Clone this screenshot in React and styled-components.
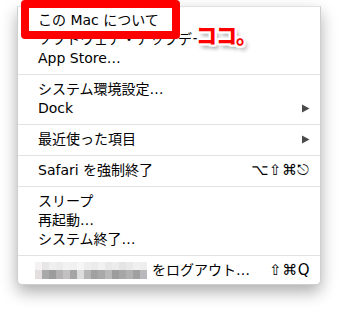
import React from "react";
import styled, { createGlobalStyle } from "styled-components";

const GlobalStyle = createGlobalStyle`
  html, body { margin: 0; padding: 0; background: #ffffff; }
  body { font-family: "DejaVu Sans", "Noto Sans CJK JP", sans-serif; }
`;

const Stage = styled.div`
  position: relative;
  width: 338px;
  height: 311px;
  box-sizing: border-box;
  padding: 6px 0 0 17px;
  overflow: hidden;
`;

const Menu = styled.div`
  width: 304px;
  box-sizing: border-box;
  background: #ffffff;
  border: 1px solid #cfcfcf;
  border-top-color: #e2e2e2;
  border-radius: 0 0 5px 5px;
  box-shadow: 0 7px 16px rgba(0, 0, 0, 0.32);
  padding: 4px 0;
`;

const Item = styled.div`
  display: flex;
  align-items: center;
  height: 19px;
  padding: 0 10px 0 20px;
  font-family: "DejaVu Sans", "Noto Sans CJK JP", sans-serif;
  font-size: 14px;
  line-height: 19px;
  color: #000000;
  white-space: nowrap;
`;

const Label = styled.span`
  flex: 1;
  display: flex;
  align-items: center;
`;

const Shortcut = styled.span`
  font-family: "DejaVu Sans", "Noto Sans CJK JP", sans-serif;
  font-size: 15px;
  letter-spacing: 0.5px;
  color: #000;
`;

const Separator = styled.div`
  height: 1px;
  background: #e2e2e2;
  margin: 6px 0 5px;
`;

const Mosaic = styled.svg`
  display: block;
  margin-right: 5px;
  margin-left: -3px;
`;

const Highlight = styled.div`
  position: absolute;
  left: 21px;
  top: 0;
  width: 159px;
  height: 39px;
  box-sizing: border-box;
  border: 8px solid #ff0000;
  border-radius: 4px;
`;

const Callout = styled.div`
  position: absolute;
  left: 196px;
  top: 24px;
  font-family: "Noto Sans CJK JP", sans-serif;
  font-weight: 900;
  font-size: 21px;
  line-height: 1;
  color: #ff0000;
  letter-spacing: -1px;
  text-shadow:
    2px 0 0 #fff, -2px 0 0 #fff, 0 2px 0 #fff, 0 -2px 0 #fff,
    2px 2px 0 #fff, -2px -2px 0 #fff, 2px -2px 0 #fff, -2px 2px 0 #fff,
    3px 4px 4px rgba(0, 0, 0, 0.45);
`;

const Arrow = () => (
  <svg width="9" height="9" viewBox="0 0 9 9">
    <path d="M1 0.5 L8.5 4.5 L1 8.5 Z" fill="#4a4a4a" />
  </svg>
);

const topRow = ["#f4f2f2", "#e6e6e6", "#efefef", "#ececec", "#f2f2f2", "#f0f0f0", "#f6f6f6", "#eeeeee", "#ebebeb", "#f1f1f1", "#e8e8e8", "#ececec", "#e4e4e4", "#e9e9e9", "#f0f0f0", "#eeeeee"];
const bottomRow = ["#e4dede", "#a9a9a9", "#9c9c9c", "#b3b1b1", "#c2c0c0", "#a5a5a5", "#dcdcdc", "#b5b5b5", "#a1a1a1", "#a9a9a9", "#b9b9b9", "#9d9d9d", "#a6a6a6", "#b1b1b1", "#a0a0a0", "#b9b9bd"];

const UserMosaic = () => (
  <Mosaic width="112" height="17" viewBox="0 0 112 17">
    {topRow.map((c, i) => (
      <rect key={"t" + i} x={i * 7} y={0} width={7} height={8} fill={c} />
    ))}
    {bottomRow.map((c, i) => (
      <rect key={"b" + i} x={i * 7} y={8} width={7} height={9} fill={c} />
    ))}
  </Mosaic>
);

export default function App() {
  return (
    <>
      <GlobalStyle />
      <Stage>
        <Menu>
          <Item><Label>この Mac について</Label></Item>
          <Item><Label>ソフトウェア・アップデート…</Label></Item>
          <Item><Label>App Store…</Label></Item>
          <Separator />
          <Item><Label>システム環境設定…</Label></Item>
          <Item><Label>Dock</Label><Arrow /></Item>
          <Separator />
          <Item><Label>最近使った項目</Label><Arrow /></Item>
          <Separator />
          <Item><Label>Safari を強制終了</Label><Shortcut>⌥⇧⌘⎋</Shortcut></Item>
          <Separator />
          <Item><Label>スリープ</Label></Item>
          <Item><Label>再起動…</Label></Item>
          <Item><Label>システム終了…</Label></Item>
          <Separator />
          <Item>
            <Label><UserMosaic />をログアウト…</Label>
            <Shortcut>⇧⌘Q</Shortcut>
          </Item>
        </Menu>
        <Highlight />
        <Callout>ココ。</Callout>
      </Stage>
    </>
  );
}
